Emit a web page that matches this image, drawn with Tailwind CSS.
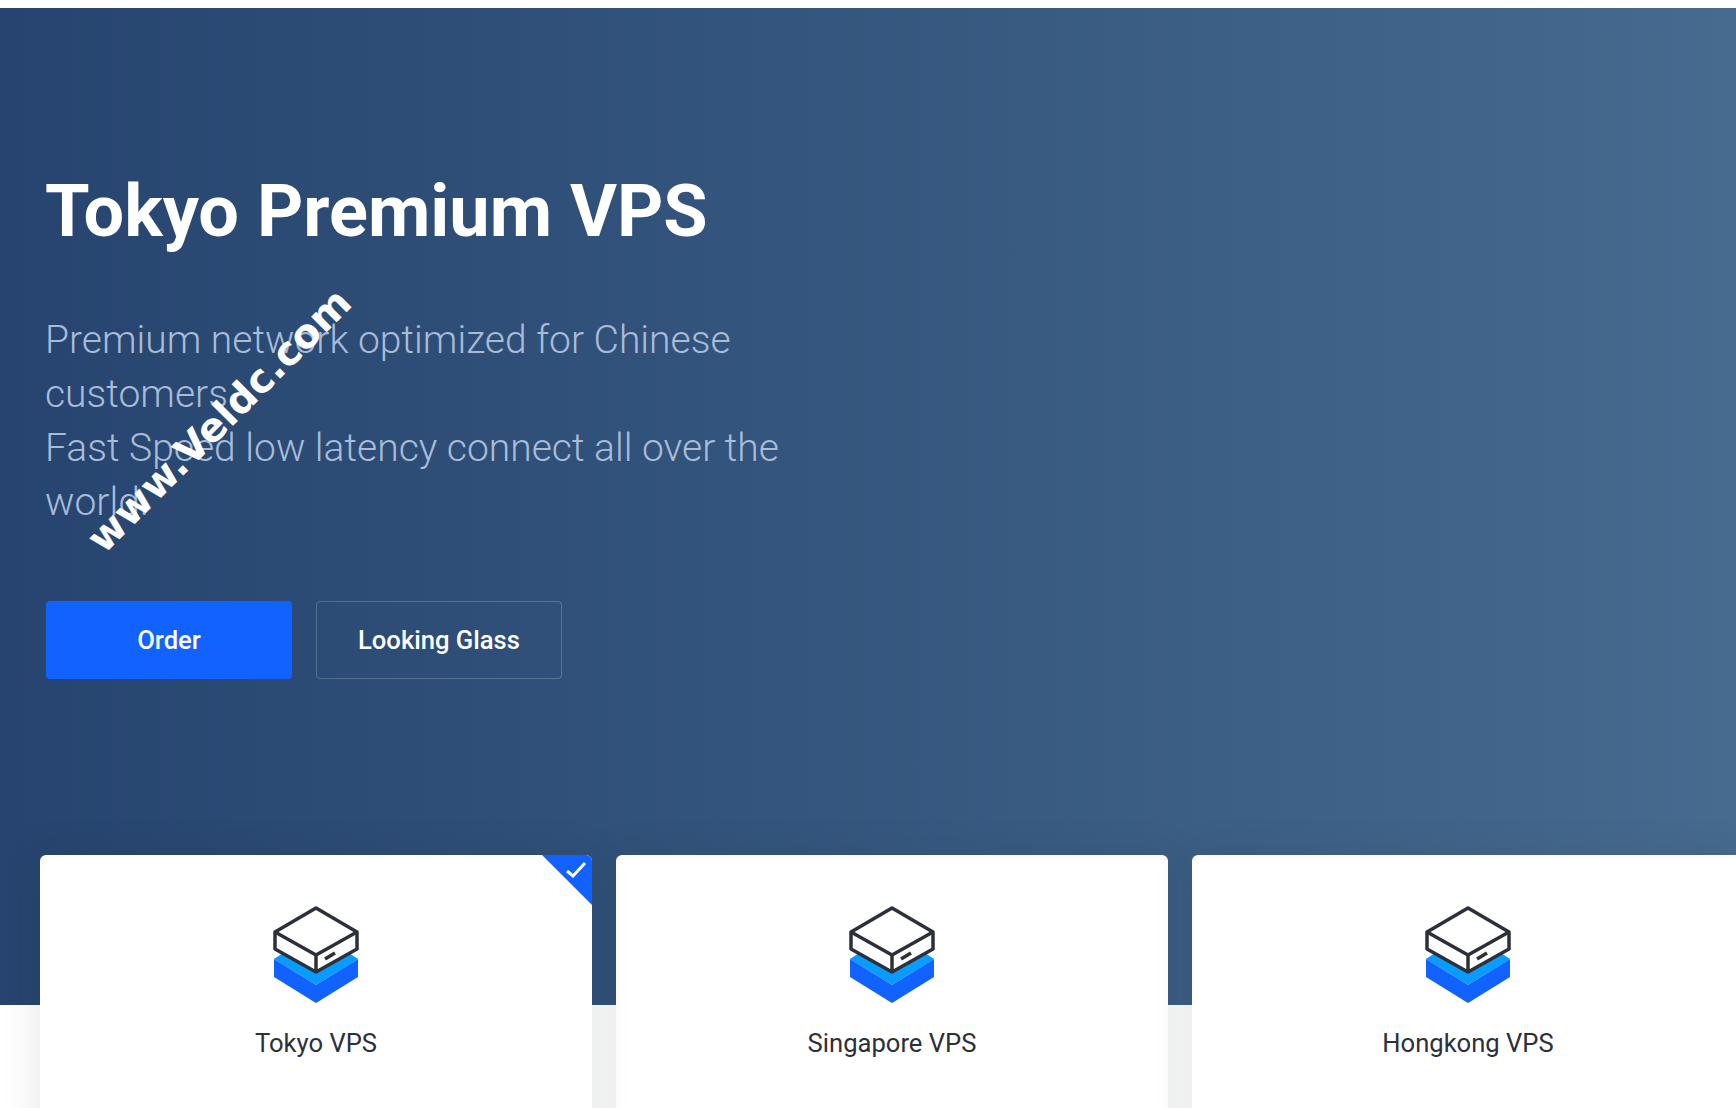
<!DOCTYPE html>
<html><head><meta charset="utf-8"><script src="https://cdn.jsdelivr.net/npm/@tailwindcss/browser@4"></script></head>
<body class="bg-white overflow-hidden font-['Roboto',sans-serif]">
<div class="w-[1736px] h-[1108px] overflow-hidden relative pt-2">
<section class="h-[997px] bg-gradient-to-r from-[#26446f] to-[#466b8f] pl-[46px] pt-[168px] relative">
<h1 class="-ml-px text-[72px] leading-[72px] font-bold text-white h-[72px]">Tokyo Premium VPS</h1>
<p class="-ml-px mt-[65px] w-[760px] text-[39px] leading-[54px] font-light text-[#a8bcd8]">Premium network optimized for Chinese customers.<br>Fast Speed low latency connect all over the world.</p>
<div class="mt-[72px] flex gap-6">
<a class="w-[246px] h-[78px] rounded bg-[#1162ff] text-white font-medium text-[25.6px] flex items-center justify-center">Order</a>
<a class="w-[246px] h-[78px] rounded border border-white/20 text-white font-medium text-[25.6px] flex items-center justify-center">Looking Glass</a>
</div>
<div class="absolute left-[44px] top-[397px] w-[340px] text-center text-white font-['DejaVu_Sans',sans-serif] font-bold text-[40px] leading-none -rotate-45 whitespace-nowrap">www.Veldc.com</div>
</section>
<section class="relative -mt-[150px] ml-10 flex gap-6 w-[1704px]">
<div class="relative shrink-0 w-[552px] h-[400px] bg-white rounded-md shadow-[0_0_40px_rgba(30,40,50,0.12)] flex flex-col items-center pt-[44px] overflow-hidden">
<svg class="w-[92px] h-[108px]" viewBox="0 0 92 108"><polygon points="4,60 46,32 88,60 46,86" fill="#0a9bff"/><polygon points="4,60 46,86 88,60 88,78 46,104 4,78" fill="#1162ff"/><path d="M46 9L87 33V50L46 73L5 50V33Z" fill="#fff" stroke="#2b303b" stroke-width="3.5" stroke-linejoin="round"/><path d="M5 33L46 56L87 33M46 56V73M55 60L65 54" fill="none" stroke="#2b303b" stroke-width="3.5"/></svg>
<div class="mt-[20px] text-[25.6px] leading-8 text-[#2b303b]">Tokyo VPS</div>
<div class="absolute right-0 top-0 w-[50px] h-[50px] bg-[#1162ff] [clip-path:polygon(0_0,100%_0,100%_100%)]"></div>
<svg class="absolute right-[4px] top-[3px] w-6 h-6" viewBox="0 0 24 24"><path d="M3 13L9 18L21 5" fill="none" stroke="#fff" stroke-width="3"/></svg>
</div>
<div class="shrink-0 w-[552px] h-[400px] bg-white rounded-md shadow-[0_0_40px_rgba(30,40,50,0.12)] flex flex-col items-center pt-[44px]">
<svg class="w-[92px] h-[108px]" viewBox="0 0 92 108"><polygon points="4,60 46,32 88,60 46,86" fill="#0a9bff"/><polygon points="4,60 46,86 88,60 88,78 46,104 4,78" fill="#1162ff"/><path d="M46 9L87 33V50L46 73L5 50V33Z" fill="#fff" stroke="#2b303b" stroke-width="3.5" stroke-linejoin="round"/><path d="M5 33L46 56L87 33M46 56V73M55 60L65 54" fill="none" stroke="#2b303b" stroke-width="3.5"/></svg>
<div class="mt-[20px] text-[25.6px] leading-8 text-[#2b303b]">Singapore VPS</div>
</div>
<div class="shrink-0 w-[552px] h-[400px] bg-white rounded-md shadow-[0_0_40px_rgba(30,40,50,0.12)] flex flex-col items-center pt-[44px]">
<svg class="w-[92px] h-[108px]" viewBox="0 0 92 108"><polygon points="4,60 46,32 88,60 46,86" fill="#0a9bff"/><polygon points="4,60 46,86 88,60 88,78 46,104 4,78" fill="#1162ff"/><path d="M46 9L87 33V50L46 73L5 50V33Z" fill="#fff" stroke="#2b303b" stroke-width="3.5" stroke-linejoin="round"/><path d="M5 33L46 56L87 33M46 56V73M55 60L65 54" fill="none" stroke="#2b303b" stroke-width="3.5"/></svg>
<div class="mt-[20px] text-[25.6px] leading-8 text-[#2b303b]">Hongkong VPS</div>
</div>
</section>
</div>
</body></html>
